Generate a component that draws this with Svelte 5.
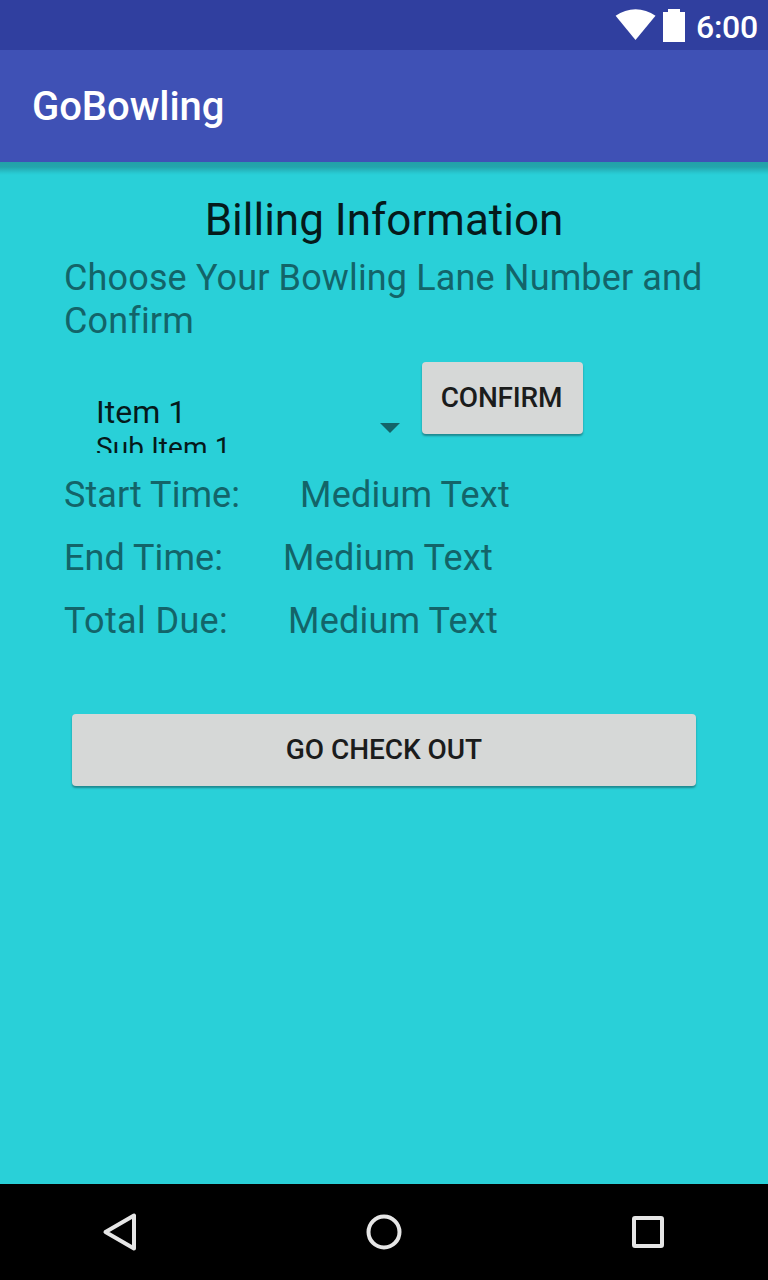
<script>
  const rows = [
    { label: 'Start Time:', value: 'Medium Text', width: 236, spacing: 0.05 },
    { label: 'End Time:', value: 'Medium Text', width: 219, spacing: 0.05 },
    { label: 'Total Due:', value: 'Medium Text', width: 224, spacing: 0.35 }
  ];
</script>

<div class="screen">
  <div class="status">
    <svg width="40" height="32" viewBox="0 0 40 32"><path d="M-.4 6.8C11.6-1.9 27.6-1.9 39.5 6.8L19.5 31z" fill="#fff" /></svg>
    <svg class="battery" width="22" height="33" viewBox="0 0 22 33"><path d="M5 0h12v3h5v30H0V3h5z" fill="#fff" /></svg>
    <span class="clock">6:00</span>
  </div>
  <header><span>GoBowling</span></header>
  <main>
    <h1><span>Billing Information</span></h1>
    <p>Choose Your Bowling Lane Number and Confirm</p>
    <div class="picker">
      <div class="spinner">
        <div class="items">
          <div class="item">Item 1</div>
          <div class="sub">Sub Item 1</div>
        </div>
        <svg class="arrow" width="20" height="10" viewBox="0 0 20 10"><path d="M0 0h20L10 10z" fill="#136469" /></svg>
      </div>
      <button class="confirm"><span>CONFIRM</span></button>
    </div>
    <div class="rows">
      {#each rows as row}
        <div class="row">
          <span class="label" style="width: {row.width}px; letter-spacing: {row.spacing}px">{row.label}</span>
          <span class="value">{row.value}</span>
        </div>
      {/each}
    </div>
    <button class="checkout"><span>GO CHECK OUT</span></button>
  </main>
  <nav>
    <svg width="40" height="44" viewBox="0 0 40 44"><path d="M34 5.5v33L5.5 22z" fill="none" stroke="#e6e6e6" stroke-width="4" stroke-linejoin="round" /></svg>
    <svg width="40" height="44" viewBox="0 0 40 44"><circle cx="20" cy="22" r="15.5" fill="none" stroke="#e6e6e6" stroke-width="4" /></svg>
    <svg width="40" height="44" viewBox="0 0 40 44"><rect x="6" y="8" width="28" height="28" rx="1" fill="none" stroke="#e6e6e6" stroke-width="4" /></svg>
  </nav>
</div>

<style>
  :global(body) { margin: 0; }
  .screen {
    width: 768px;
    height: 1280px;
    display: flex;
    flex-direction: column;
    background: #29d0d8;
    font-family: Roboto, sans-serif;
    overflow: hidden;
  }
  svg { display: block; overflow: visible; }
  .status {
    height: 50px;
    box-sizing: border-box;
    padding: 9px 10px 0 0;
    display: flex;
    justify-content: flex-end;
    align-items: flex-start;
    background: #303f9f;
    color: #fff;
  }
  .battery { margin-left: 7px; }
  .clock { width: 62px; margin-left: 11px; font-size: 32px; line-height: 36px; font-weight: 500; letter-spacing: -0.3px; white-space: nowrap; }
  header {
    height: 112px;
    box-sizing: border-box;
    padding: 1px 0 0 32px;
    background: #3f51b5;
    color: #fff;
    font-size: 40px;
    font-weight: 500;
    line-height: 112px;
    letter-spacing: -0.05px;
  }
  main {
    flex: 1;
    padding: 32px 64px 0;
    background: linear-gradient(#23a1a8 0, #23a5ac 5px, #28c8d0 11px, #29d0d8 13px);
  }
  h1 {
    margin: 0 0 11px;
    font-size: 44px;
    font-weight: 400;
    line-height: 52px;
    text-align: center;
    color: #051a1b;
  }
  p { margin: 0 -20px 0 0; width: 650px; font-size: 36px; line-height: 43px; letter-spacing: 0.14px; color: #136469; }
  .picker { height: 110px; display: flex; align-items: flex-start; }
  .spinner { width: 336px; height: 110px; display: flex; align-items: flex-start; color: #051a1b; }
  .items {
    width: 284px;
    height: 110px;
    box-sizing: border-box;
    padding: 50px 0 0 32px;
    overflow: hidden;
  }
  .item { font-size: 32px; line-height: 38px; }
  .sub { font-size: 28px; line-height: 33px; letter-spacing: 0.1px; }
  .arrow { margin: 80px 0 0 32px; }
  button {
    display: block;
    height: 72px;
    border: 0;
    padding: 0;
    border-radius: 4px;
    background: #d6d8d7;
    box-shadow: 0 2px 2px rgba(22, 80, 85, 0.55);
    color: #1b1c1c;
    font: 500 28px/72px Roboto, sans-serif;
    text-align: center;
  }
  .confirm { width: 161px; margin: 19px 0 0 22px; padding-right: 2px; letter-spacing: -0.2px; }
  .rows { margin-top: 21px; display: flex; flex-direction: column; gap: 20px; }
  .row { display: flex; font-size: 36px; line-height: 43px; color: #136469; }
  .label { flex: none; }
  .value { letter-spacing: 0.2px; }
  .checkout { width: 624px; margin: 71px 0 0 8px; letter-spacing: -0.05px; }
  nav {
    height: 96px;
    display: flex;
    align-items: center;
    justify-content: space-between;
    box-sizing: border-box;
    padding: 0 100px;
    background: #000;
  }
</style>
